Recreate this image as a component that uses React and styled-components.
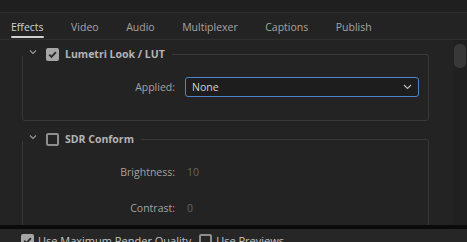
import React from "react";
import styled, { createGlobalStyle } from "styled-components";

const GlobalStyle = createGlobalStyle`
  html, body {
    margin: 0;
    padding: 0;
    background: #232323;
    overflow: hidden;
  }
  body {
    font-family: "Open Sans", "Noto Sans", sans-serif;
    font-size: 10.5px;
    color: #a8a8a8;
  }
`;

const Frame = styled.div`
  width: 467px;
  height: 242px;
  display: flex;
  flex-direction: column;
  background: #232323;
`;

const TopStrip = styled.div`
  height: 12px;
  flex-shrink: 0;
  background: #1f1f1f;
  border-bottom: 1px solid #303030;
`;

const TabBar = styled.div`
  height: 26px;
  flex-shrink: 0;
  display: flex;
  align-items: stretch;
  gap: 27.5px;
  padding-left: 11px;
  border-bottom: 1px solid #303030;
`;

const Tab = styled.div`
  position: relative;
  display: flex;
  align-items: center;
  padding-top: 2px;
  color: ${(p) => (p.$active ? "#d2d2d2" : "#a4a4a4")};

  &::after {
    content: "";
    display: ${(p) => (p.$active ? "block" : "none")};
    position: absolute;
    left: 0;
    right: 0;
    bottom: 1px;
    height: 2px;
    border-radius: 1px;
    background: #cfcfcf;
  }
`;

const Body = styled.div`
  flex: 1;
  display: flex;
  min-height: 0;
`;

const Content = styled.div`
  flex: 1;
  padding: 7px 24px 0 22px;
  overflow: hidden;
`;

const ScrollTrack = styled.div`
  width: 12px;
  background: #202020;
  padding: 4px 1px 0 1px;
`;

const ScrollThumb = styled.div`
  height: 24px;
  border-radius: 5px;
  background: #383838;
`;

const Group = styled.fieldset`
  margin: 0 0 11px 0;
  padding: 16px 0 23px 0;
  border: 1px solid #383838;
  border-radius: 3px;
  min-width: 0;
`;

const Legend = styled.legend`
  padding: 0 7px 0 6px;
  margin-left: 0;
`;

const LegendInner = styled.div`
  display: flex;
  align-items: center;
  height: 14px;
`;

const Chevron = styled.svg`
  width: 8px;
  height: 8px;
  margin-right: 9px;
  margin-top: -4px;
`;

const Box = styled.span`
  box-sizing: border-box;
  width: 13px;
  height: 13px;
  border-radius: 2px;
  display: inline-flex;
  align-items: center;
  justify-content: center;
  flex-shrink: 0;
  background: ${(p) => (p.$checked ? "#a6a6a6" : "transparent")};
  border: ${(p) => (p.$checked ? "none" : "2px solid #8e8e8e")};
`;

const Title = styled.span`
  margin-left: 6px;
  font-weight: 700;
  color: #b4b4b4;
  white-space: nowrap;
`;

const Rows = styled.div`
  display: flex;
  flex-direction: column;
  gap: 16px;
`;

const Row = styled.div`
  display: grid;
  grid-template-columns: 152px 1fr;
  column-gap: 10px;
  align-items: center;
  height: 20px;
`;

const Label = styled.span`
  text-align: right;
  color: #a2a2a2;
`;

const Value = styled.span`
  color: #666666;
  padding-left: 2px;
`;

const Select = styled.div`
  box-sizing: border-box;
  height: 20px;
  margin-right: 9px;
  border: 1px solid #4a86c8;
  border-radius: 3px;
  background: #1d1d1d;
  display: flex;
  align-items: center;
  justify-content: space-between;
  padding: 0 6px 0 6px;
  color: #d4d4d4;
`;

const Footer = styled.div`
  box-sizing: border-box;
  flex-shrink: 0;
  height: 17px;
  border-top: 4px solid #0b0b0b;
  background: #262626;
  display: flex;
  align-items: flex-start;
  padding: 5px 0 0 21px;
  gap: 8px;
  overflow: hidden;
`;

const FooterItem = styled.div`
  display: flex;
  align-items: center;
  gap: 4px;
  color: #c4c4c4;
  white-space: nowrap;
  font-size: 11px;
  line-height: 13px;
`;

function Check() {
  return (
    <svg width="11" height="11" viewBox="0 0 11 11">
      <path d="M2.2 5.6 L4.5 7.9 L8.9 3.2" fill="none" stroke="#2a2a2a" strokeWidth="1.8" />
    </svg>
  );
}

function Checkbox({ checked }) {
  return <Box $checked={checked}>{checked && <Check />}</Box>;
}

function Caret() {
  return (
    <Chevron viewBox="0 0 8 8">
      <path d="M1 2.5 L4 5.5 L7 2.5" fill="none" stroke="#9a9a9a" strokeWidth="1.1" />
    </Chevron>
  );
}

function Section({ title, checked, children }) {
  return (
    <Group>
      <Legend>
        <LegendInner>
          <Caret />
          <Checkbox checked={checked} />
          <Title>{title}</Title>
        </LegendInner>
      </Legend>
      <Rows>{children}</Rows>
    </Group>
  );
}

const tabs = ["Effects", "Video", "Audio", "Multiplexer", "Captions", "Publish"];

export default function App() {
  return (
    <Frame>
      <GlobalStyle />
      <TopStrip />
      <TabBar>
        {tabs.map((t, i) => (
          <Tab key={t} $active={i === 0}>
            {t}
          </Tab>
        ))}
      </TabBar>
      <Body>
        <Content>
          <Section title="Lumetri Look / LUT" checked>
            <Row>
              <Label>Applied:</Label>
              <Select>
                <span>None</span>
                <svg width="9" height="6" viewBox="0 0 9 6">
                  <path d="M1 1 L4.5 4.5 L8 1" fill="none" stroke="#b8b8b8" strokeWidth="1.2" />
                </svg>
              </Select>
            </Row>
          </Section>
          <Section title="SDR Conform">
            <Row>
              <Label>Brightness:</Label>
              <Value>10</Value>
            </Row>
            <Row>
              <Label>Contrast:</Label>
              <Value>0</Value>
            </Row>
          </Section>
        </Content>
        <ScrollTrack>
          <ScrollThumb />
        </ScrollTrack>
      </Body>
      <Footer>
        <FooterItem>
          <Checkbox checked />
          Use Maximum Render Quality
        </FooterItem>
        <FooterItem>
          <Checkbox />
          Use Previews
        </FooterItem>
      </Footer>
    </Frame>
  );
}
